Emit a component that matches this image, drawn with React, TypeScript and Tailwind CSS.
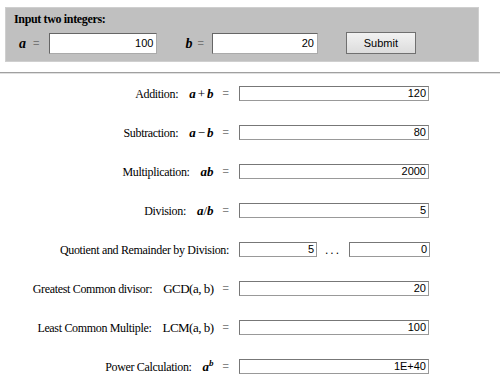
import React from "react";

const serif = "font-['Liberation_Serif','Times_New_Roman',serif]";
const sans = "font-['Liberation_Sans',Arial,sans-serif]";

function Box({ value, w }: { value: string; w: string }) {
  return (
    <div
      className={`${w} h-[15px] border border-t-[#777] border-l-[#777] border-r-[#999] border-b-[#999] bg-white ${sans} text-[11px] leading-[13px] text-black text-right pr-[2px]`}
    >
      {value}
    </div>
  );
}

function V({ c }: { c: string }) {
  return <span className="italic font-bold">{c}</span>;
}

function Eq() {
  return <span className={`${sans} text-[11px] text-[#888] ml-[9px]`}>=</span>;
}

function Row({
  label,
  math,
  children,
}: {
  label: string;
  math?: React.ReactNode;
  children: React.ReactNode;
}) {
  return (
    <div className="flex items-center h-[39px]">
      <div className={`w-[229px] flex items-center justify-end ${serif} text-black`}>
        <span className="text-[12px] tracking-[-0.33px]">{label}</span>
        {math && (
          <>
            <span className="ml-[11px] text-[13px]">{math}</span>
            <Eq />
          </>
        )}
      </div>
      <div className="ml-[10px] flex items-center">{children}</div>
    </div>
  );
}

export default function App() {
  return (
    <div className="w-[500px] h-[386px] bg-white overflow-hidden">
      <div className="pt-[7px] pl-[5px]">
        <div className={`w-[474px] h-[55px] bg-[#c0c0c0] border border-[#cfcfcf] ${serif}`}>
          <div className="pl-[8px] pt-[3px] text-[12px] tracking-[-0.35px] font-bold text-black leading-[16px]">
            Input two integers:
          </div>
          <div className="flex items-center mt-[5px] pl-[13px]">
            <span className="italic font-bold text-[14px] w-[10px]">a</span>
            <span className={`${sans} text-[11px] text-[#777] ml-[4px]`}>=</span>
            <div className="ml-[10px]">
              <div className={`w-[108px] h-[21px] bg-white border border-t-[#666] border-l-[#666] border-r-[#aaa] border-b-[#aaa] ${sans} text-[11px] leading-[19px] text-right pr-[3px]`}>
                100
              </div>
            </div>
            <span className="italic font-bold text-[14px] ml-[28px] w-[10px]">b</span>
            <span className={`${sans} text-[11px] text-[#777] ml-[2px]`}>=</span>
            <div className="ml-[8px]">
              <div className={`w-[106px] h-[21px] bg-white border border-t-[#666] border-l-[#666] border-r-[#aaa] border-b-[#aaa] ${sans} text-[11px] leading-[19px] text-right pr-[3px]`}>
                20
              </div>
            </div>
            <button
              className={`ml-[28px] w-[70px] h-[22px] border border-[#707070] bg-gradient-to-b from-[#f2f2f2] to-[#dcdcdc] ${sans} text-[11px] text-black`}
            >
              Submit
            </button>
          </div>
        </div>
      </div>
      <div className="mt-[10px] h-[2px] border-t border-[#a0a0a0] border-b border-b-[#e0e0e0]" />
      <div>
        <Row label="Addition:" math={<><V c="a" /><span className="mx-[2px]">+</span><V c="b" /></>}>
          <Box value="120" w="w-[190px]" />
        </Row>
        <Row label="Subtraction:" math={<><V c="a" /><span className="mx-[2px]">−</span><V c="b" /></>}>
          <Box value="80" w="w-[190px]" />
        </Row>
        <Row label="Multiplication:" math={<><V c="a" /><V c="b" /></>}>
          <Box value="2000" w="w-[190px]" />
        </Row>
        <Row label="Division:" math={<><V c="a" /><span>/</span><V c="b" /></>}>
          <Box value="5" w="w-[190px]" />
        </Row>
        <Row label="Quotient and Remainder by Division:">
          <Box value="5" w="w-[78px]" />
          <span className={`${sans} text-[12px] mx-[8px] tracking-[2px]`}>...</span>
          <Box value="0" w="w-[81px]" />
        </Row>
        <Row label="Greatest Common divisor:" math={<span className="tracking-[-0.5px]">GCD(a, b)</span>}>
          <Box value="20" w="w-[190px]" />
        </Row>
        <Row label="Least Common Multiple:" math={<span className="tracking-[-0.5px]">LCM(a, b)</span>}>
          <Box value="100" w="w-[190px]" />
        </Row>
        <Row label="Power Calculation:" math={<><V c="a" /><sup className="italic font-bold text-[9px]">b</sup></>}>
          <Box value="1E+40" w="w-[190px]" />
        </Row>
      </div>
    </div>
  );
}
